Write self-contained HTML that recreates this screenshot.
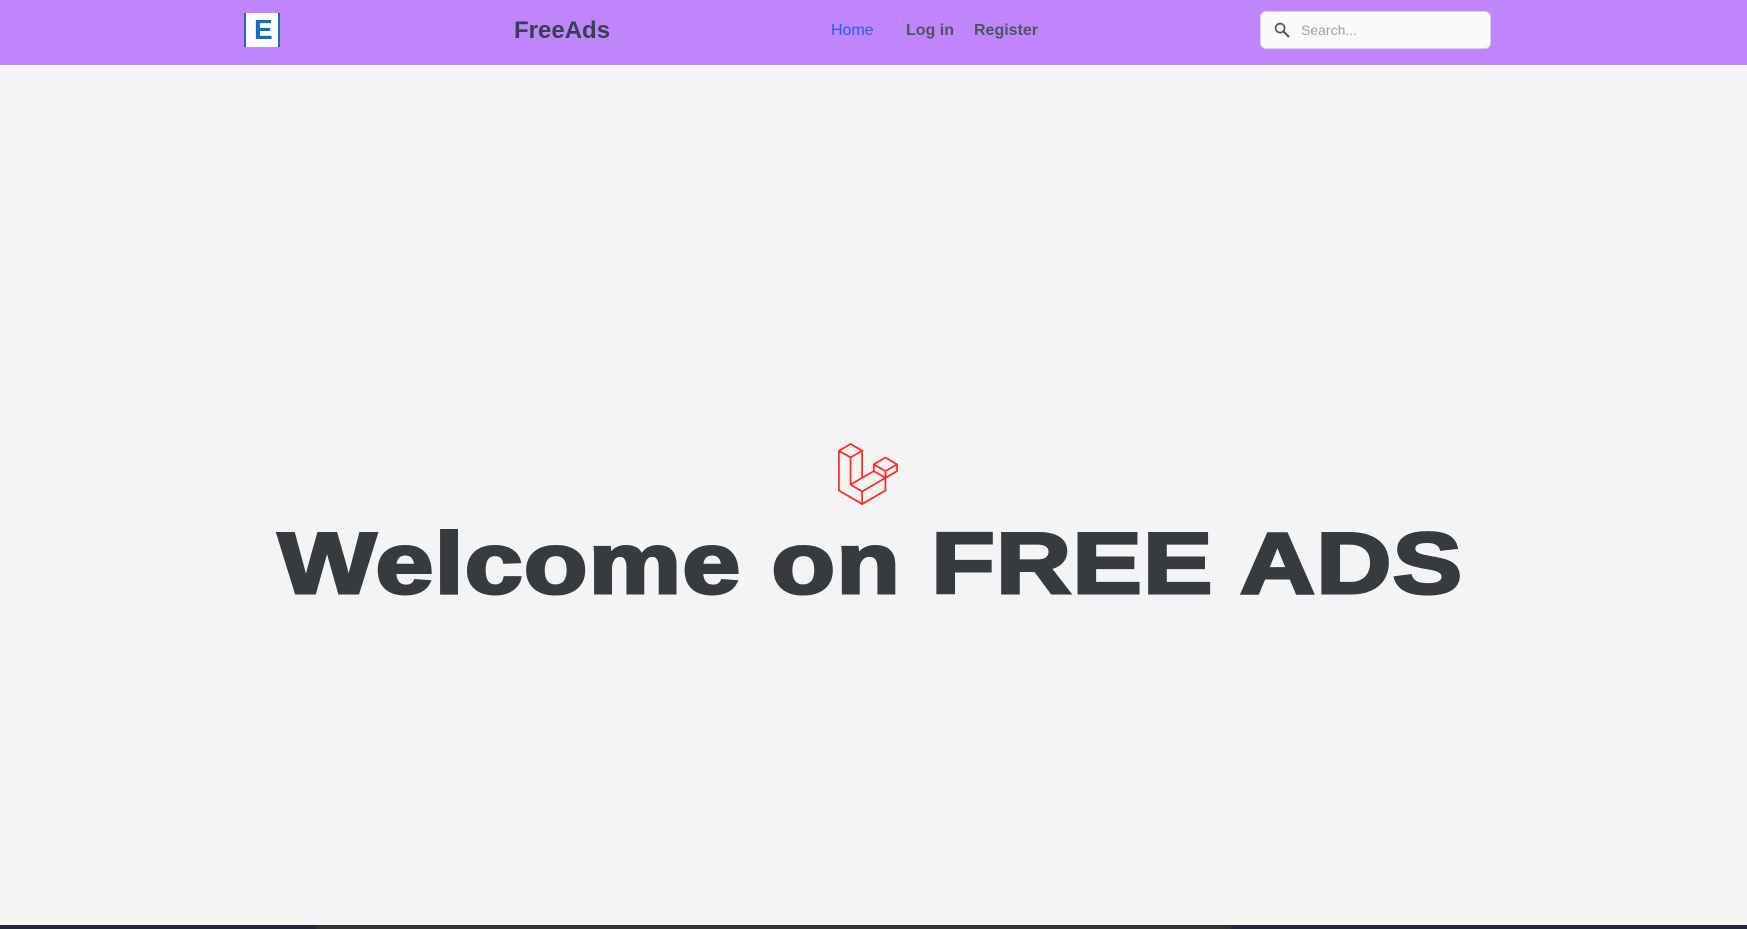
<!DOCTYPE html>
<html><head><meta charset="utf-8"><style>
html,body{margin:0;padding:0}
body{width:1747px;height:929px;background:#f3f4f6;position:relative;overflow:hidden;font-family:"Liberation Sans",sans-serif}
.hdr{position:absolute;left:0;top:0;width:1747px;height:65px;background:#c084fc}
.logo{position:absolute;left:244px;top:13px;width:36px;height:34px;background:#fff;border-left:2px solid #1f6fb8;border-right:2px solid #1f6fb8;box-sizing:border-box}
.logo span{position:absolute;left:8px;top:1px;font:bold 28px "Liberation Sans",sans-serif;color:#0a6fc2;line-height:32px}
.brand{position:absolute;left:514px;top:17px;font-weight:bold;font-size:24px;color:#374151}
.nav{position:absolute;top:22px;font-size:16px;font-weight:bold;color:#4b5563}
.search{position:absolute;left:1260px;top:11px;width:231px;height:38px;background:#f9fafb;border:1px solid #d1d5db;border-radius:6px;box-sizing:border-box}
.search span{position:absolute;left:40px;top:10px;font-size:14px;color:#9ca3af}
h1{position:absolute;left:278px;top:515px;margin:0;font-size:86px;font-weight:900;color:#373a3f;white-space:nowrap;letter-spacing:1px;transform-origin:0 0;transform:scaleX(1.21);-webkit-text-stroke:3px #373a3f}
.foot{position:absolute;left:0;top:925px;width:1747px;height:4px;background:#1e293b}
.foot div{position:absolute;left:316px;width:915px;top:0;height:4px;background:#333}
</style></head><body>
<div class="hdr">
 <div class="logo"><span>E</span></div>
 <div class="brand">FreeAds</div>
 <div class="nav" style="left:831px;color:#2563eb;font-weight:normal">Home</div>
 <div class="nav" style="left:906px">Log in</div>
 <div class="nav" style="left:974px">Register</div>
 <div class="search">
  <svg style="position:absolute;left:12px;top:9px" width="18" height="18" viewBox="0 0 24 24"><circle cx="9.5" cy="9.5" r="6" fill="none" stroke="#4b5563" stroke-width="2.2"/><path d="M14 14l6.5 6.5" stroke="#4b5563" stroke-width="2.6" stroke-linecap="round"/></svg>
  <span>Search...</span>
 </div>
</div>
<svg style="position:absolute;left:837px;top:443px" width="62" height="63" viewBox="0 0 62 65" fill="none" stroke="#ff2d20" stroke-width="1.8" stroke-linejoin="round">
 <path d="M1 8L13 1L25 8L13 15Z"/>
 <path d="M1 8V49L25 63L49 49V36"/>
 <path d="M13 15V43L25 50L49 36"/>
 <path d="M25 8V36L13 43"/>
 <path d="M25 36L37 29"/>
 <path d="M37 22L49 15L61 22L49 29Z"/>
 <path d="M37 22V29L49 36V29"/>
 <path d="M61 22V29L49 36"/>
 <path d="M25 50V63"/>
</svg>
<h1>Welcome on FREE ADS</h1>
<div class="foot"><div></div></div>
</body></html>
